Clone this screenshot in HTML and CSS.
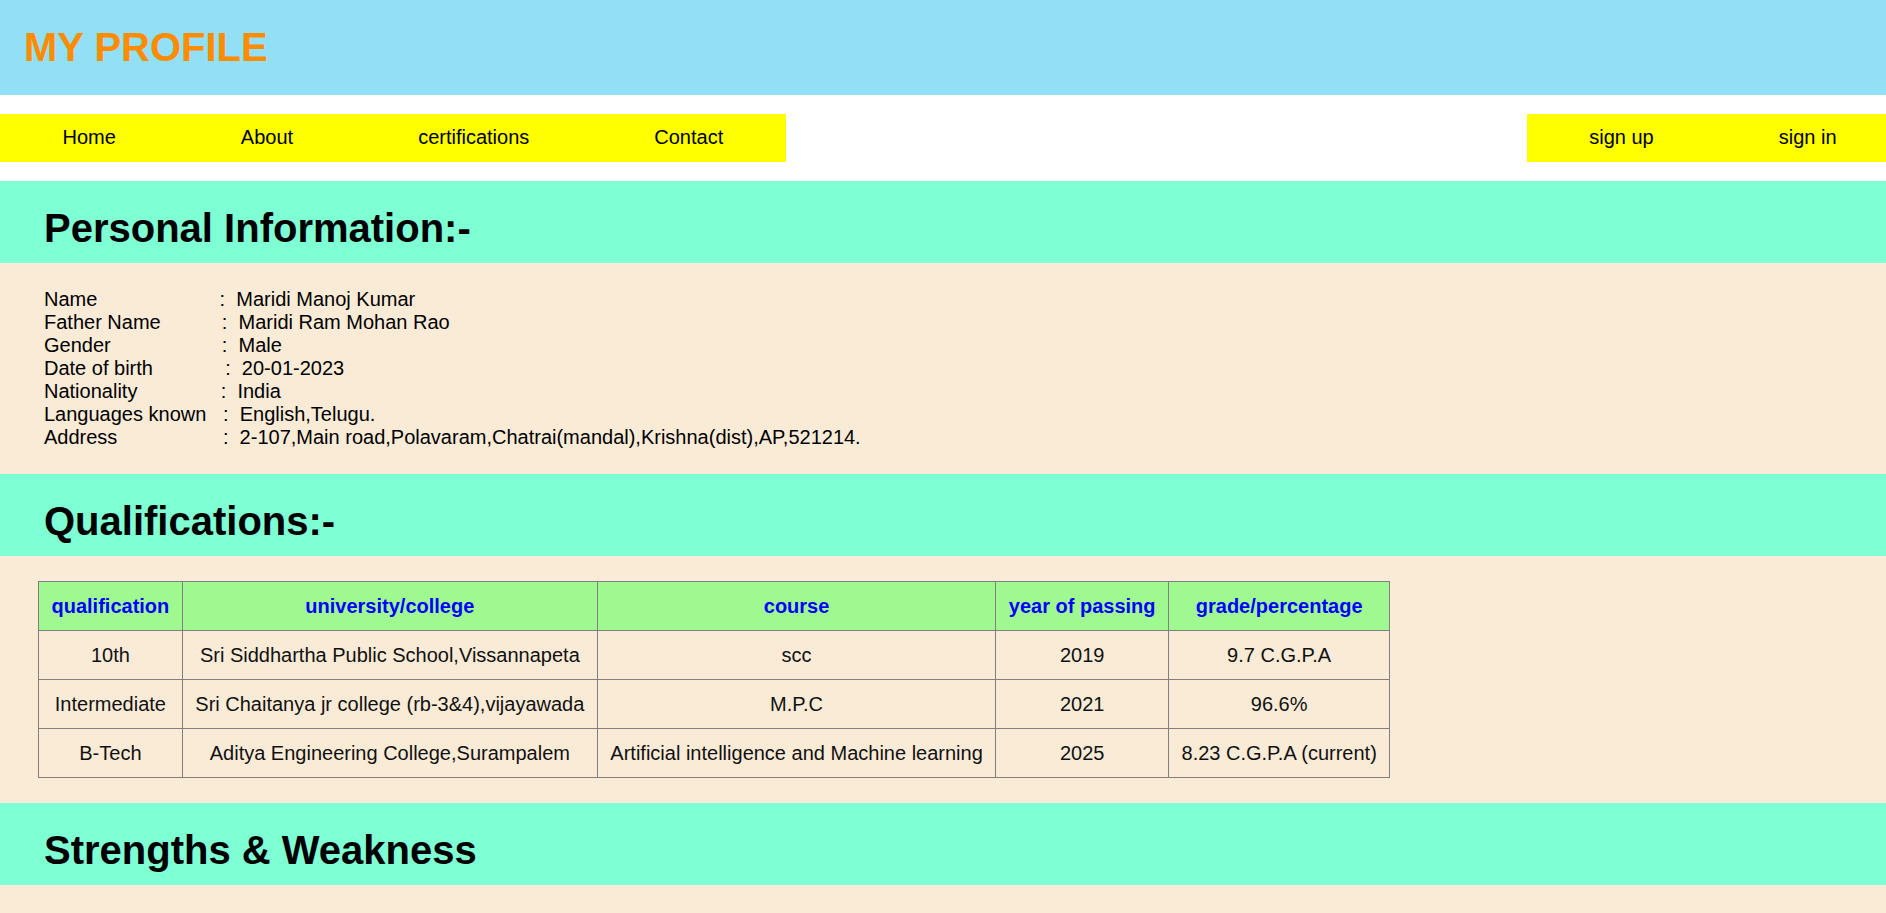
FILE: index.html
```html
<!DOCTYPE html>
<html lang="en">
<head>
<meta charset="utf-8">
<title>My Profile</title>
<link rel="stylesheet" href="styles.css">
</head>
<body>
<header class="top">
  <h1 class="title">MY PROFILE</h1>
</header>
<nav class="menu">
  <ul class="links">
    <li><a href="#">Home</a></li>
    <li><a href="#">About</a></li>
    <li><a href="#">certifications</a></li>
    <li><a href="#">Contact</a></li>
  </ul>
  <ul class="links links-right">
    <li><a href="#">sign up</a></li>
    <li><a href="#">sign in</a></li>
  </ul>
</nav>
<section class="block">
  <h2 class="band">Personal Information:-</h2>
  <div class="info">
    <div class="row">Name                      :  Maridi Manoj Kumar</div>
    <div class="row">Father Name           :  Maridi Ram Mohan Rao</div>
    <div class="row">Gender                    :  Male</div>
    <div class="row">Date of birth             :  20-01-2023</div>
    <div class="row">Nationality               :  India</div>
    <div class="row">Languages known   :  English,Telugu.</div>
    <div class="row">Address                   :  2-107,Main road,Polavaram,Chatrai(mandal),Krishna(dist),AP,521214.</div>
  </div>
</section>
<section class="block">
  <h2 class="band">Qualifications:-</h2>
  <div class="quals">
    <table class="grid">
      <thead>
        <tr>
          <th>qualification</th>
          <th>university/college</th>
          <th>course</th>
          <th>year of passing</th>
          <th>grade/percentage</th>
        </tr>
      </thead>
      <tbody>
        <tr>
          <td>10th</td>
          <td>Sri Siddhartha Public School,Vissannapeta</td>
          <td>scc</td>
          <td>2019</td>
          <td>9.7 C.G.P.A</td>
        </tr>
        <tr>
          <td>Intermediate</td>
          <td>Sri Chaitanya jr college (rb-3&amp;4),vijayawada</td>
          <td>M.P.C</td>
          <td>2021</td>
          <td>96.6%</td>
        </tr>
        <tr>
          <td>B-Tech</td>
          <td>Aditya Engineering College,Surampalem</td>
          <td>Artificial intelligence and Machine learning</td>
          <td>2025</td>
          <td>8.23 C.G.P.A (current)</td>
        </tr>
      </tbody>
    </table>
  </div>
</section>
<section class="block">
  <h2 class="band">Strengths &amp; Weakness</h2>
  <div class="rest"></div>
</section>
</body>
</html>
```
FILE: styles.css
```css
html, body {
  margin: 0;
  padding: 0;
}
body {
  background: #ffffff;
  font-family: "Liberation Sans", Arial, sans-serif;
  color: #000000;
}
.top {
  background: #91e0f6;
  padding: 24px 0 25px 24px;
}
.title {
  margin: 0;
  font-size: 40px;
  font-weight: bold;
  line-height: 46px;
  color: #ff8c00;
}
.menu {
  display: flex;
  justify-content: space-between;
  margin: 19px 0;
}
.links {
  display: flex;
  margin: 0;
  padding: 0;
  list-style: none;
  background: #ffff00;
}
.links li a {
  display: block;
  padding: 11.5px 62.5px 13.5px;
  font-size: 20px;
  line-height: 23px;
  color: #000000;
  text-decoration: none;
}
.links-right li:last-child a {
  padding-right: 49.5px;
}
.block {
  background: #faebd7;
}
.band {
  margin: 0;
  background: #7fffd4;
  padding: 24px 0 12px 44px;
  font-size: 40px;
  line-height: 46px;
  font-weight: bold;
}
.info {
  padding: 25px 0 25px 44px;
  font-size: 20px;
  line-height: 23px;
}
.row {
  white-space: pre;
}
.quals {
  padding: 25px 0 25px 38px;
}
.grid {
  border-collapse: collapse;
  font-size: 20px;
  line-height: 23px;
}
.grid th,
.grid td {
  border: 1px solid #808080;
  padding: 12.5px 12.5px;
  text-align: center;
  white-space: nowrap;
}
.grid th {
  background: #a0f990;
  color: #0000ff;
  font-weight: bold;
}
.grid td {
  color: #111111;
}
.rest {
  height: 60px;
}
```
